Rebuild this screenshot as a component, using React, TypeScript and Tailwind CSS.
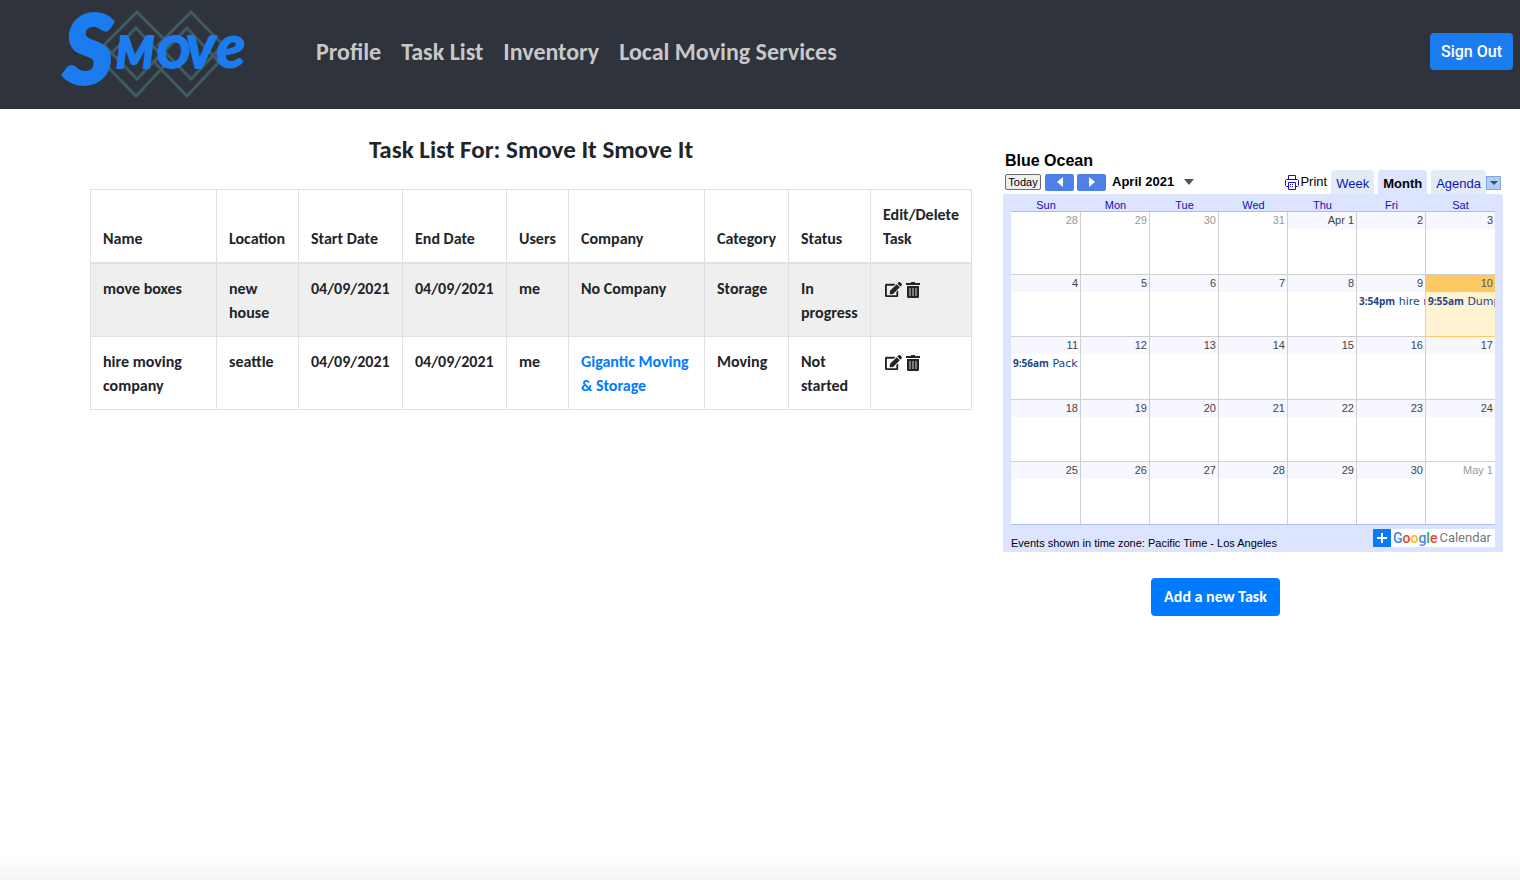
import React from "react";
import { FaEdit } from "react-icons/fa";

type Task = {
  name: string;
  location: string;
  start: string;
  end: string;
  users: string;
  company: string;
  link?: boolean;
  category: string;
  status: string;
};

const tasks: Task[] = [
  { name: "move boxes", location: "new house", start: "04/09/2021", end: "04/09/2021", users: "me", company: "No Company", category: "Storage", status: "In progress" },
  { name: "hire moving company", location: "seattle", start: "04/09/2021", end: "04/09/2021", users: "me", company: "Gigantic Moving & Storage", link: true, category: "Moving", status: "Not started" },
];

type Day = { label: string; out?: boolean; today?: boolean; time?: string; event?: string };

const d = (n: number): Day => ({ label: String(n) });

const weeks: Day[][] = [
  [
    { label: "28", out: true },
    { label: "29", out: true },
    { label: "30", out: true },
    { label: "31", out: true },
    { label: "Apr 1" },
    d(2),
    d(3),
  ],
  [d(4), d(5), d(6), d(7), d(8), { label: "9", time: "3:54pm", event: "hire m" }, { label: "10", today: true, time: "9:55am", event: "Dump" }],
  [{ label: "11", time: "9:56am", event: "Pack" }, d(12), d(13), d(14), d(15), d(16), d(17)],
  [d(18), d(19), d(20), d(21), d(22), d(23), d(24)],
  [d(25), d(26), d(27), d(28), d(29), d(30), { label: "May 1", out: true }],
];

function Logo() {
  return (
    <svg width="190" height="92" viewBox="0 0 190 92" role="img" aria-label="Smove" className="block overflow-visible">
      <g fill="none" stroke="#3f5a60" strokeWidth="3">
        <path d="M77 6L110 39L77 73L44 39z" />
        <path d="M76 22L108 56L76 90L43 56z" />
        <path d="M131 6L163 39L131 73L98 39z" />
        <path d="M127 22L159 56L127 90L94 56z" />
      </g>
      <g fill="#1b7cf0" stroke="#1b7cf0" strokeLinejoin="round" fontFamily="Lato, sans-serif" fontWeight="900" fontStyle="italic">
        <text x="4" y="77" fontSize="94" strokeWidth="4">S</text>
        <text x="56 97 126" y="62" fontSize="43" strokeWidth="2">MOV</text>
        <text x="156" y="62" fontSize="60" strokeWidth="1">e</text>
      </g>
    </svg>
  );
}

function TrashIcon() {
  return (
    <svg width="14" height="16" viewBox="0 0 14 16" aria-hidden="true">
      <path d="M5 0h4v1h5v2H0V1h5z" fill="#212529" />
      <path d="M1 4h12v10.500a1.500 1.500 0 0 1-1.500 1.500h-9A1.500 1.500 0 0 1 1 14.500z" fill="#212529" />
      <path d="M4 6v8M7 6v8M10 6v8" stroke="#94969a" strokeWidth="1.500" />
    </svg>
  );
}

function PrintIcon() {
  return (
    <svg width="15" height="15" viewBox="0 0 15 15" fill="none" stroke="#1414b8" aria-hidden="true">
      <path d="M3.500 4.500v-4h7v4M3.500 11.500h-2l-1-1v-5l1-1h11l1 1v5l-1 1h-2" />
      <path d="M3.500 7.500h7v7h-7z" fill="#fff" />
      <path d="M5 9.500h4M5 11.500h4" strokeDasharray="1 1" />
    </svg>
  );
}

const navLinks = ["Profile", "Task List", "Inventory", "Local Moving Services"];
const headings = ["Name", "Location", "Start Date", "End Date", "Users", "Company", "Category", "Status", "Edit/Delete Task"];
const tab = "h-6 rounded-t-sm px-[5px] pt-1 text-[13px] leading-5";

function TaskTable() {
  return (
    <table className="w-full table-fixed border-collapse text-left text-base leading-6 font-bold">
      <colgroup>
        <col />
        <col className="w-[82px]" />
        <col className="w-[104px]" />
        <col className="w-[104px]" />
        <col className="w-[62px]" />
        <col className="w-[136px]" />
        <col className="w-[84px]" />
        <col className="w-[82px]" />
        <col className="w-[101px]" />
      </colgroup>
      <thead>
        <tr>
          {headings.map((h) => (
            <th key={h} className="border border-b-2 border-[#dee2e6] pt-[13px] pr-2.5 pb-[11px] pl-3 align-bottom">{h}</th>
          ))}
        </tr>
      </thead>
      <tbody className="align-top">
        {tasks.map((t) => (
          <tr key={t.name} className="odd:bg-[#efefef] [&>td]:border [&>td]:border-[#dee2e6] [&>td]:pt-[13px] [&>td]:pr-2.5 [&>td]:pb-[11px] [&>td]:pl-3">
            <td>{t.name}</td>
            <td>{t.location}</td>
            <td>{t.start}</td>
            <td>{t.end}</td>
            <td>{t.users}</td>
            <td>{t.link ? <a href="#company" className="text-[#007bff]">{t.company}</a> : t.company}</td>
            <td>{t.category}</td>
            <td>{t.status}</td>
            <td>
              <div className="flex h-6 items-center gap-1 pt-px pl-0.5">
                <button type="button" aria-label={`Edit ${t.name}`}><FaEdit size={17} /></button>
                <button type="button" aria-label={`Delete ${t.name}`}><TrashIcon /></button>
              </div>
            </td>
          </tr>
        ))}
      </tbody>
    </table>
  );
}

function DayCell({ day }: { day: Day }) {
  const cell = day.today
    ? "border-b border-b-[#fdc962] bg-[#fff3d1]"
    : "border-b border-[#d0d0d0] bg-white";
  const bar = day.today ? "bg-[#fdc962] text-[#555]" : day.out ? "text-[#999]" : "bg-[#f7f7ff] text-[#444]";
  return (
    <td className={`border-r p-0 align-top last:border-r-0 group-last:border-b-0 ${cell}`}>
      <div className={`h-[17px] pr-[2px] text-right text-[11px] leading-[17px] ${bar}`}>{day.label}</div>
      {day.event && (
        <a href="#event" className="block overflow-hidden pt-px pl-[2px] font-['DejaVu_Sans',sans-serif] text-[11px] leading-4 whitespace-nowrap text-[#1c4587]">
          <b className="font-['Open_Sans',sans-serif] text-[10px]">{day.time}</b> {day.event}
        </a>
      )}
    </td>
  );
}

function Calendar() {
  return (
    <section className="font-['Liberation_Sans',Arial,sans-serif] text-black">
      <h2 className="pl-0.5 text-base leading-5 font-bold">Blue Ocean</h2>
      <div className="flex h-[23px] items-end justify-between pr-0.5 pl-0.5">
        <div className="flex h-6 items-center gap-1">
          <button type="button" className="h-4 w-9 rounded-xs border border-[#6b6b6b] bg-[#efefef] text-center text-[11px] leading-[14px]">Today</button>
          <div className="flex gap-[3px]">
            <button type="button" aria-label="Previous month" className="flex h-[17px] w-[29px] items-center justify-center rounded-xs bg-[#4f80e8]">
              <svg width="6" height="10" viewBox="0 0 6 10" fill="#fff"><path d="M6 0v10L0 5z" /></svg>
            </button>
            <button type="button" aria-label="Next month" className="flex h-[17px] w-[29px] items-center justify-center rounded-xs bg-[#4f80e8]">
              <svg width="6" height="10" viewBox="0 0 6 10" fill="#fff"><path d="M0 0v10l6-5z" /></svg>
            </button>
          </div>
          <button type="button" className="flex items-center gap-2.5 pl-0.5 text-[13px] font-bold">
            April 2021
            <svg width="10" height="6" viewBox="0 0 10 6" fill="#555"><path d="M0 0h10L5 6z" /></svg>
          </button>
        </div>
        <div className="flex items-end">
          <button type="button" className="mr-1 flex h-6 items-center text-[13px]"><PrintIcon />Print</button>
          <div className="flex gap-1">
            <button type="button" className={`${tab} bg-[#e3ebf6] text-[#1111bb]`}>Week</button>
            <button type="button" className={`${tab} bg-[#dde4ff] font-bold`}>Month</button>
            <button type="button" className={`${tab} bg-[#e3ebf6] text-[#1111bb]`}>Agenda</button>
          </div>
          <button type="button" aria-label="More views" className="mb-1 flex h-[14px] w-[15px] items-center justify-center border border-[#7fa6dd] bg-[#b5cbf0]">
            <svg width="8" height="4" viewBox="0 0 8 4" fill="#1a56b8"><path d="M0 0h8L4 4z" /></svg>
          </button>
        </div>
      </div>
      <div className="rounded-xs bg-[#dde4ff] px-2 pt-1">
        <table className="w-full table-fixed border-separate border-spacing-0">
          <colgroup>
            <col className="w-[70px]" />
            <col span={6} />
          </colgroup>
          <thead>
            <tr>
              {["Sun", "Mon", "Tue", "Wed", "Thu", "Fri", "Sat"].map((w) => (
                <th key={w} className="border-b border-[#a7bff5] p-0 pt-px text-center text-[11px] leading-3 font-normal text-[#1111bb]">{w}</th>
              ))}
            </tr>
          </thead>
          <tbody>
            {weeks.map((week, i) => (
              <tr key={i} className="group h-[62px] first:h-[63px] nth-3:h-[63px]">
                {week.map((day) => <DayCell key={day.label} day={day} />)}
              </tr>
            ))}
          </tbody>
        </table>
        <div className="flex h-7 items-end justify-between border-t border-[#a7bff5]">
          <p className="pb-px text-[11px] leading-4">Events shown in time zone: Pacific Time - Los Angeles</p>
          <a href="#google-calendar" className="mb-[5px] flex h-[18px] items-center bg-white pr-1 font-[Roboto,sans-serif]">
            <span className="flex size-[18px] items-center justify-center bg-[#0a7bf5]">
              <svg width="10" height="10" viewBox="0 0 10 10" stroke="#fff" strokeWidth="2"><path d="M5 0v10M0 5h10" /></svg>
            </span>
            <span className="pl-0.5 text-[14px] leading-[18px] font-medium">
              <span className="text-[#4285f4]">G</span>
              <span className="text-[#ea4335]">o</span>
              <span className="text-[#fbbc05]">o</span>
              <span className="text-[#4285f4]">g</span>
              <span className="text-[#34a853]">l</span>
              <span className="text-[#ea4335]">e</span>
            </span>
            <span className="pl-0.5 text-[13px] leading-[18px] text-[#777]">Calendar</span>
          </a>
        </div>
      </div>
    </section>
  );
}

export default function App() {
  return (
    <div className="flex min-h-screen flex-col bg-white font-[Carlito,Calibri,Lato,sans-serif] text-[#212529]">
      <header className="flex h-[109px] items-center bg-[#2f333b] pr-[7px] pb-1.5 pl-[60px]">
        <a href="#home" className="shrink-0"><Logo /></a>
        <nav className="flex flex-1 gap-5 pl-[66px] text-2xl leading-8 font-bold text-[#c8c8c8]">
          {navLinks.map((l) => <a key={l} href="#nav">{l}</a>)}
        </nav>
        <button type="button" className="h-[37px] rounded-sm bg-[#1b7cf0] px-[11px] font-[Roboto,sans-serif] text-base leading-6 font-medium text-white">Sign Out</button>
      </header>
      <main className="flex flex-1 items-start gap-[31px] pr-[17px] pl-[90px]">
        <section className="min-w-0 flex-1 pt-[25px]">
          <h1 className="mb-[23px] text-center text-[25px] leading-8 font-bold">Task List For: Smove It Smove It</h1>
          <TaskTable />
        </section>
        <aside className="w-[500px] shrink-0 pt-[42px]">
          <Calendar />
          <div className="flex justify-center pt-[26px] pr-[75px]">
            <button type="button" className="h-[38px] rounded-sm bg-[#007bff] px-[13px] text-base leading-6 font-bold text-white">Add a new Task</button>
          </div>
        </aside>
      </main>
      <div className="h-6 bg-linear-to-b from-white to-[#f5f5f5]" />
    </div>
  );
}
